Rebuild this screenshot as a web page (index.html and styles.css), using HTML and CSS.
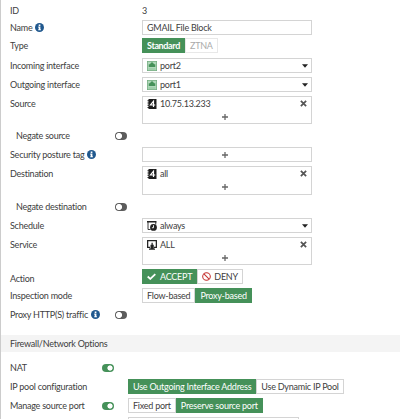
FILE: index.html
```
<!DOCTYPE html>
<html>
<head>
    <meta charset="utf-8">
    <title>Firewall Policy</title>
    <link rel="stylesheet" href="styles.css">
</head>
<body>
<svg class="defs" width="0" height="0">
    <symbol id="info" viewBox="0 0 18 18">
        <circle cx="9" cy="9" r="9" fill="#20588e"/>
        <path d="M7.400 2.800h3.400v3H7.400zM6.500 7.200h4.300v5.200h1v2.300H6.500v-2.300h.9V9.400h-.9z" fill="#fff"/>
    </symbol>
    <symbol id="port" viewBox="0 0 20 20">
        <rect x="0.8" y="0.8" width="18.4" height="18.4" fill="#b0d8ba" stroke="#72ad80" stroke-width="1.6"/>
        <path d="M3.500 12V6.500H6V5h2V3h4v2h2v1.500h2.500V12z" fill="#459159"/>
        <path d="M3 16h14" stroke="#8fc49c" stroke-width="2"/>
    </symbol>
    <symbol id="address" viewBox="0 0 18 20">
        <path d="M2 0h16v20H2z" fill="#1c1c1c"/>
        <path d="M0 3.500h3M0 8h3M0 12.500h3M0 17h3" stroke="#1c1c1c" stroke-width="2"/>
        <path d="M12 16V4.500L6 12h9.500" fill="none" stroke="#fff" stroke-width="2.400"/>
    </symbol>
    <symbol id="clock" viewBox="0 0 20 20">
        <path d="M0 0h19v3H0z" fill="#222"/>
        <path d="M2 2v15h5M17.500 2v5" fill="none" stroke="#222" stroke-width="1.800"/>
        <circle cx="13" cy="12.800" r="6.800" fill="#222"/>
        <path d="M13 8.500v5h-3.200" fill="none" stroke="#fff" stroke-width="1.800"/>
    </symbol>
    <symbol id="service" viewBox="0 0 20 20">
        <path d="M6 14.500H1.300V1.300h17.400v13.200H14" fill="none" stroke="#222" stroke-width="2.500"/>
        <path d="M7 17V9.500h2V5.500h2.500v4h2V17zM4 17h12v2.500H4z" fill="#222"/>
    </symbol>
    <symbol id="caret" viewBox="0 0 12 8">
        <path d="M0 0.500h12L6 7.500z" fill="#222"/>
    </symbol>
    <symbol id="remove" viewBox="0 0 16 16">
        <path d="M2 2l12 12M14 2L2 14" stroke="#555" stroke-width="4"/>
    </symbol>
    <symbol id="plus" viewBox="0 0 18 18">
        <path d="M9 0v18M0 9h18" stroke="#666" stroke-width="3.800"/>
    </symbol>
    <symbol id="check" viewBox="0 0 26 20">
        <path d="M2 10l7.500 7L24 3" fill="none" stroke="#fff" stroke-width="5"/>
    </symbol>
    <symbol id="deny" viewBox="0 0 26 26">
        <circle cx="13" cy="13" r="11" fill="none" stroke="#c5302e" stroke-width="3"/>
        <path d="M5.500 5.500l15 15" stroke="#c5302e" stroke-width="3"/>
    </symbol>
</svg>

<div class="policy">
    <div class="row id-row">
        <div class="label">ID</div>
        <div>3</div>
    </div>
    <div class="row">
        <div class="label">Name <svg class="info"><use href="#info"/></svg></div>
        <div class="field">GMAIL File Block</div>
    </div>
    <div class="row type-row">
        <div class="label">Type</div>
        <div class="buttons">
            <div class="btn active bold">Standard</div>
            <div class="btn disabled">ZTNA</div>
        </div>
    </div>
    <div class="row">
        <div class="label">Incoming interface</div>
        <div class="field"><svg class="icon"><use href="#port"/></svg>port2<svg class="caret"><use href="#caret"/></svg></div>
    </div>
    <div class="row">
        <div class="label">Outgoing interface</div>
        <div class="field"><svg class="icon"><use href="#port"/></svg>port1<svg class="caret"><use href="#caret"/></svg></div>
    </div>
    <div class="row tall">
        <div class="label">Source</div>
        <div class="field list">
            <div class="item"><svg class="icon"><use href="#address"/></svg>10.75.13.233<svg class="remove"><use href="#remove"/></svg></div>
            <div class="add"><svg class="plus"><use href="#plus"/></svg></div>
        </div>
    </div>
    <div class="row">
        <div class="label sub">Negate source<span class="toggle"></span></div>
    </div>
    <div class="row">
        <div class="label">Security posture tag <svg class="info"><use href="#info"/></svg></div>
        <div class="field add"><svg class="plus"><use href="#plus"/></svg></div>
    </div>
    <div class="row tall dest">
        <div class="label">Destination</div>
        <div class="field list">
            <div class="item"><svg class="icon"><use href="#address"/></svg>all<svg class="remove"><use href="#remove"/></svg></div>
            <div class="add"><svg class="plus"><use href="#plus"/></svg></div>
        </div>
    </div>
    <div class="row">
        <div class="label sub">Negate destination<span class="toggle"></span></div>
    </div>
    <div class="row">
        <div class="label">Schedule</div>
        <div class="field"><svg class="icon"><use href="#clock"/></svg>always<svg class="caret"><use href="#caret"/></svg></div>
    </div>
    <div class="row tall">
        <div class="label">Service</div>
        <div class="field list">
            <div class="item"><svg class="icon"><use href="#service"/></svg>ALL<svg class="remove"><use href="#remove"/></svg></div>
            <div class="add"><svg class="plus"><use href="#plus"/></svg></div>
        </div>
    </div>
    <div class="row action">
        <div class="label">Action</div>
        <div class="buttons">
            <div class="btn active"><svg class="check"><use href="#check"/></svg>ACCEPT</div>
            <div class="btn"><svg class="deny"><use href="#deny"/></svg>DENY</div>
        </div>
    </div>
    <div class="row">
        <div class="label">Inspection mode</div>
        <div class="buttons">
            <div class="btn">Flow-based</div>
            <div class="btn active">Proxy-based</div>
        </div>
    </div>
    <div class="row">
        <div class="label">Proxy HTTP(S) traffic <svg class="info"><use href="#info"/></svg><span class="toggle"></span></div>
    </div>

    <div class="section">Firewall/Network Options</div>

    <div class="row network">
        <div class="label">NAT<span class="toggle on"></span></div>
    </div>
    <div class="row network">
        <div class="label">IP pool configuration</div>
        <div class="buttons">
            <div class="btn active">Use Outgoing Interface Address</div>
            <div class="btn">Use Dynamic IP Pool</div>
        </div>
    </div>
    <div class="row network">
        <div class="label">Manage source port<span class="toggle on"></span></div>
        <div class="buttons">
            <div class="btn">Fixed port</div>
            <div class="btn active">Preserve source port</div>
        </div>
    </div>
    <div class="row network">
        <div class="label"></div>
        <div class="field"></div>
    </div>
</div>
</body>
</html>
```
FILE: styles.css
```
* {
    box-sizing: border-box;
}

body {
    margin: 0;
    height: 419px;
    overflow: hidden;
    background-color: #fff;
    color: #404040;
    font-family: Lato, sans-serif;
    font-size: 9px;
    letter-spacing: -0.24px;
    line-height: 13px;
    white-space: nowrap;
}

.defs {
    display: none;
}

svg {
    display: block;
    flex: none;
}

.policy {
    display: flex;
    flex-direction: column;
    gap: 4px;
    height: 419px;
    padding-top: 4px;
    border-left: 1px solid #ccc;
    overflow: hidden;
}

.row {
    display: flex;
    flex: none;
    height: 15px;
    padding-left: 9px;
}

.id-row {
    height: 12px;
}

.type-row {
    margin-top: -1px;
    margin-bottom: 1px;
}

.tall {
    height: 28px;
}

.dest {
    height: 29px;
}

.label {
    display: flex;
    align-items: center;
    width: 132px;
    height: 15px;
    padding-right: 15px;
}

.id-row .label {
    height: 13px;
}

.sub {
    padding-left: 6px;
}

.action .label {
    padding-top: 4px;
}

.network .label {
    width: 118px;
    padding-right: 14px;
}

.info {
    width: 9px;
    height: 9px;
    margin-left: 3px;
}

.toggle {
    width: 12px;
    height: 8px;
    margin-left: auto;
    border-radius: 4px;
    background: radial-gradient(circle at 4px 4px, #fff 2.7px, #5c5c5c 3.4px);
}

.toggle.on {
    background: radial-gradient(circle at 8px 4px, #fff 2.2px, #459159 3px);
}

.field {
    display: flex;
    align-items: center;
    width: 170px;
    padding: 0 3px 0 4px;
    border: 1px solid #d4d4d4;
}

.network .field {
    width: 171px;
}

.list {
    flex-direction: column;
    align-items: stretch;
}

.item {
    display: flex;
    align-items: center;
    height: 13px;
}

.add {
    display: flex;
    flex: none;
    align-items: center;
    justify-content: center;
    height: 13px;
}

.field.add {
    height: 15px;
}

.icon {
    width: 10px;
    height: 10px;
    margin-right: 3px;
}

.caret {
    width: 6px;
    height: 4px;
    margin-left: auto;
}

.remove {
    width: 7px;
    height: 7px;
    margin-left: auto;
    margin-right: 1px;
}

.plus {
    width: 6px;
    height: 6px;
    margin-right: 5px;
}

.buttons {
    display: flex;
}

.btn {
    display: flex;
    align-items: center;
    height: 15px;
    padding: 0 4px;
    border: 1px solid #d4d4d4;
}

.btn.active {
    border-color: #459159;
    background-color: #459159;
    color: #fff;
}

.btn.bold {
    font-weight: bold;
    letter-spacing: -0.35px;
}

.btn.disabled {
    border-color: #e8e8e8;
    color: #aaa;
}

.check {
    width: 9px;
    height: 7px;
    margin-right: 4px;
}

.deny {
    width: 9px;
    height: 9px;
    margin-right: 3px;
}

.section {
    flex: none;
    height: 17px;
    margin: 9px 0 4px;
    padding: 2px 9px;
    background-color: #f4f4f4;
}
```
